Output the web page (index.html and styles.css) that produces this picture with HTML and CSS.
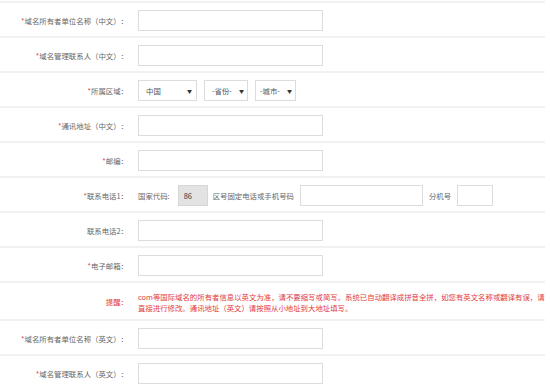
FILE: index.html
```html
<!DOCTYPE html>
<html lang="zh-CN">
<head>
    <meta charset="UTF-8">
    <title>域名信息</title>
    <link rel="stylesheet" href="styles.css">
</head>
<body>

<div class="form-box">
    <div class="row">
        <label class="lbl"><i>*</i>域名所有者单位名称（中文）：</label>
        <input type="text" class="txt">
    </div>
    <div class="row">
        <label class="lbl"><i>*</i>域名管理联系人（中文）：</label>
        <input type="text" class="txt">
    </div>
    <div class="row">
        <label class="lbl"><i>*</i>所属区域：</label>
        <div class="sel sel-country"><span>中国</span><b>▼</b></div>
        <div class="sel sel-prov"><span>-省份-</span><b>▼</b></div>
        <div class="sel sel-city"><span>-城市-</span><b>▼</b></div>
    </div>
    <div class="row">
        <label class="lbl"><i>*</i>通讯地址（中文）：</label>
        <input type="text" class="txt">
    </div>
    <div class="row">
        <label class="lbl"><i>*</i>邮编：</label>
        <input type="text" class="txt">
    </div>
    <div class="row">
        <label class="lbl"><i>*</i>联系电话1：</label>
        <span class="hint">国家代码:</span>
        <input type="text" class="code" value="86" readonly>
        <span class="hint">区号固定电话或手机号码</span>
        <input type="text" class="txt phone">
        <span class="hint">分机号</span>
        <input type="text" class="txt ext">
    </div>
    <div class="row">
        <label class="lbl">联系电话2：</label>
        <input type="text" class="txt">
    </div>
    <div class="row">
        <label class="lbl"><i>*</i>电子邮箱：</label>
        <input type="text" class="txt">
    </div>
    <div class="row row-tip">
        <label class="lbl tip-lbl">提醒：</label>
        <p class="tip">com等国际域名的所有者信息以英文为准，请不要缩写或简写。系统已自动翻译成拼音全拼，如您有英文名称或翻译有误，请直接进行修改。通讯地址（英文）请按照从小地址到大地址填写。</p>
    </div>
    <div class="row">
        <label class="lbl"><i>*</i>域名所有者单位名称（英文）：</label>
        <input type="text" class="txt">
    </div>
    <div class="row">
        <label class="lbl"><i>*</i>域名管理联系人（英文）：</label>
        <input type="text" class="txt">
    </div>
</div>

</body>
</html>
```

FILE: styles.css
```css
body, html {
    margin: 0;
    padding: 0;
    background: #ffffff;
    font-family: "Noto Sans CJK SC", "Liberation Sans", sans-serif;
    font-size: 7.4px;
    color: #666666;
    text-spacing-trim: space-all;
}

.form-box {
    width: 545px;
    margin-top: 1px;
    border-top: 2px solid #f1f1f1;
}

.row {
    box-sizing: border-box;
    display: flex;
    align-items: center;
    height: 35px;
    padding: 2px 0 0 0;
    border-bottom: 2px solid #f1f1f1;
}

.lbl {
    flex: 0 0 128px;
    text-align: right;
    margin-right: 10px;
    white-space: nowrap;
    line-height: 10px;
}

.lbl i {
    font-style: normal;
    color: #e4393c;
}

.txt {
    box-sizing: border-box;
    width: 185px;
    height: 21px;
    margin: 0;
    padding: 0 4px;
    border: 1px solid #dcdcdc;
    background: #ffffff;
    font: inherit;
}

.sel {
    box-sizing: border-box;
    display: flex;
    align-items: center;
    justify-content: space-between;
    height: 21px;
    margin-right: 7px;
    padding: 0 4px 0 7px;
    border: 1px solid #dcdcdc;
    color: #555555;
}

.sel b {
    font-weight: normal;
    font-size: 5px;
    color: #333333;
}

.sel-country { width: 59px; }
.sel-prov { width: 44px; padding-right: 3px; }
.sel-city { width: 41px; padding: 0 3px 0 4px; }

.hint {
    color: #666666;
    margin-right: 6px;
}

.code {
    box-sizing: border-box;
    width: 30px;
    height: 21px;
    margin: 0 5px 0 2px;
    padding: 0 5px;
    border: 1px solid #d6d6d6;
    background: #e3e3e3;
    color: #333333;
    font: inherit;
}

.txt.phone {
    width: 123px;
    margin-right: 6px;
}

.txt.ext {
    width: 36px;
}

.row.row-tip {
    height: 38px;
    padding: 1px 0 0 0;
}

.tip-lbl {
    color: #e4393c;
}

.tip {
    margin: 0;
    width: 408px;
    line-height: 11px;
    color: #e4393c;
}
```
